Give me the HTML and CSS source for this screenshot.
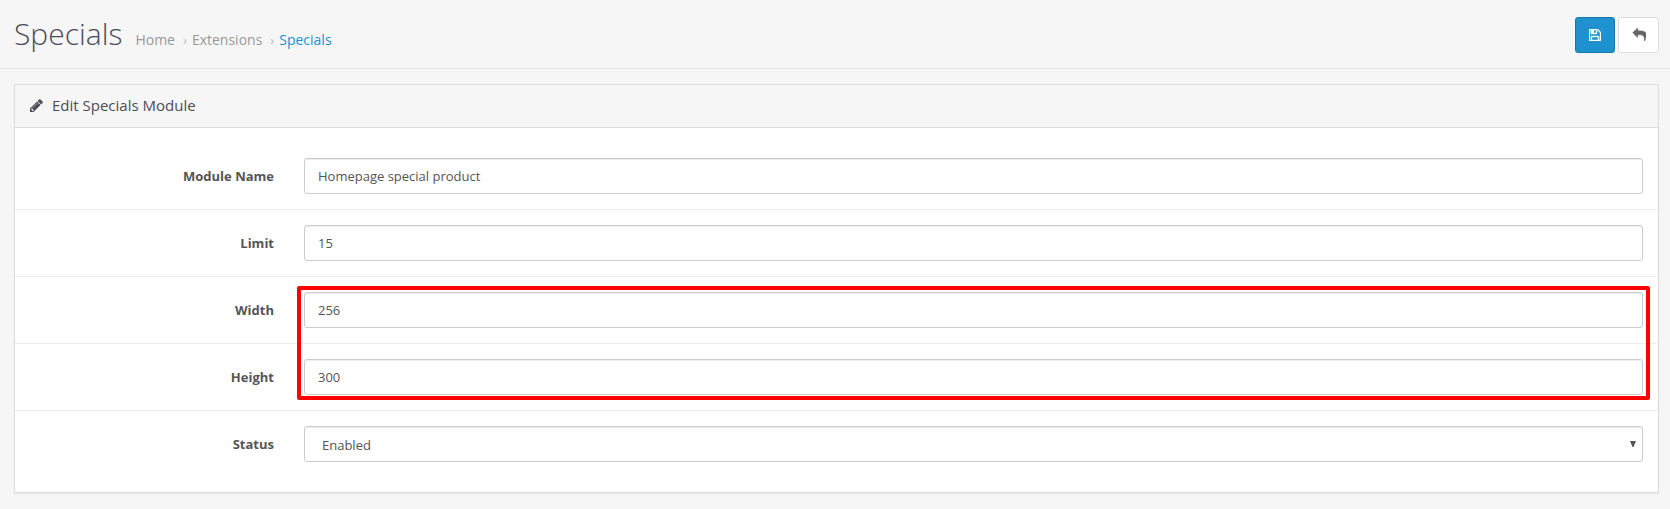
FILE: index.html
```html
<!DOCTYPE html>
<html lang="en">
<head>
<meta charset="utf-8">
<title>Specials</title>
<link rel="stylesheet" href="styles.css">
</head>
<body>
<header class="page-header">
  <h1>Specials</h1>
  <ul class="breadcrumb">
    <li><a>Home</a></li>
    <li><a>Extensions</a></li>
    <li><a class="current">Specials</a></li>
  </ul>
  <div class="actions">
    <button class="btn btn-primary" type="button" aria-label="Save"><svg class="icon-save" viewBox="0 128 1536 1536"><path d="M384 1536h768v-384h-768v384zm896 0h128v-896q0-14-10-38.500t-20-34.500l-281-281q-10-10-34-20t-39-10v416q0 40-28 68t-68 28h-576q-40 0-68-28t-28-68v-416h-128v1280h128v-416q0-40 28-68t68-28h832q40 0 68 28t28 68v416zm-384-928v-320q0-13-9.500-22.500t-22.500-9.500h-192q-13 0-22.500 9.500t-9.500 22.500v320q0 13 9.500 22.500t22.500 9.500h192q13 0 22.500-9.500t9.500-22.500zm640 32v928q0 40-28 68t-68 28h-1344q-40 0-68-28t-28-68v-1344q0-40 28-68t68-28h928q40 0 88 20t76 48l280 280q28 28 48 76t20 88z"/></svg></button>
    <button class="btn btn-default" type="button" aria-label="Back"><svg class="icon-reply" viewBox="0 0 1792 1792"><path d="M1792 1120q0 166-127 451-3 7-10.500 24t-13.500 30-13 22q-12 17-28 17-15 0-23.500-10t-8.500-25q0-9 2.500-26.500t2.500-23.500q5-68 5-123 0-112-19.500-200.500t-54.500-153.500-89.500-111-122.500-75-149.500-40.500-173.500-12.500h-224v256q0 26-19 45t-45 19-45-19l-512-512q-19-19-19-45t19-45l512-512q19-19 45-19t45 19 19 45v256h224q713 0 875 403 53 134 53 333z"/></svg></button>
  </div>
</header>
<main class="panel">
  <div class="panel-heading">
    <svg class="icon-pencil" viewBox="128 128 1536 1536"><path d="M491 1536l91-91-235-235-91 91v107h128v128h107zm523-928q0-22-22-22-10 0-17 7l-542 542q-7 7-7 17 0 22 22 22 10 0 17-7l542-542q7-7 7-17zm-54-192l416 416-832 832h-416v-416zm683 96q0 53-37 90l-166 166-416-416 166-165q36-38 90-38 53 0 91 38l235 234q37 39 37 91z"/></svg>
    <h2>Edit Specials Module</h2>
  </div>
  <form class="panel-body">
    <div class="form-group"><label for="name">Module Name</label><input class="control" id="name" value="Homepage special product"></div>
    <div class="form-group"><label for="limit">Limit</label><input class="control" id="limit" value="15"></div>
    <div class="highlighted">
      <div class="form-group"><label for="width">Width</label><input class="control" id="width" value="256"></div>
      <div class="form-group"><label for="height">Height</label><input class="control" id="height" value="300"></div>
      <div class="highlight"></div>
    </div>
    <div class="form-group"><label for="status">Status</label>
      <div class="control select"><span id="status">Enabled</span><svg class="caret" viewBox="0 0 6 6"><path d="M0 0h6L3.500 6h-1z"/></svg></div>
    </div>
  </form>
</main>
</body>
</html>
```
FILE: styles.css
```css
* { box-sizing: border-box; }
body {
  margin: 0;
  height: 509px;
  overflow: hidden;
  background: #f6f6f6;
  color: #555;
  font: 13px/20px "Open Sans", sans-serif;
}
svg { display: block; fill: currentColor; }
.page-header {
  display: flex;
  height: 69px;
  padding: 0 11px 0 14px;
  border-bottom: 1px solid #e7e7e7;
}
h1 {
  margin: 13px 0 0;
  color: #4c4d5a;
  font-size: 30px;
  font-weight: 300;
  line-height: 41px;
}
.breadcrumb {
  display: flex;
  margin: 30px 0 0 13px;
  padding: 0;
  list-style: none;
  color: #999;
  font-size: 14px;
}
.breadcrumb li + li::before {
  content: "›";
  padding: 0 5px 0 8px;
  color: #bbb;
  font-size: 13px;
}
.breadcrumb .current { color: #1e91cf; }
.actions {
  display: flex;
  gap: 3px;
  margin: 17px 0 0 auto;
}
.btn {
  display: flex;
  align-items: center;
  justify-content: center;
  height: 36px;
  padding: 0;
  border: 1px solid;
  border-radius: 3px;
}
.btn-primary {
  width: 40px;
  background: #1e91cf;
  border-color: #1978ab;
  color: #fff;
}
.btn-default {
  width: 41px;
  background: #fff;
  border-color: #ddd;
  color: #666;
}
.icon-save { width: 12px; height: 12px; stroke: #fff; stroke-width: 50; }
.icon-reply { width: 14px; height: 14px; stroke: #666; stroke-width: 60; }
.panel {
  height: 409px;
  margin: 15px 11px 0 14px;
  background: #fff;
  border: 1px solid #dcdcdc;
  box-shadow: 0 1px 1px rgba(0, 0, 0, .05);
}
.panel-heading {
  display: flex;
  align-items: center;
  height: 43px;
  padding: 0 0 1px 15px;
  background: #f6f6f6;
  border-bottom: 1px solid #dcdcdc;
  color: #4c4d5a;
}
h2 {
  margin: -1px 0 0 9px;
  font-size: 15px;
  font-weight: 400;
}
.icon-pencil { width: 13px; height: 13px; }
.panel-body { padding-top: 15px; }
.form-group {
  display: flex;
  align-items: center;
  height: 67px;
  padding-right: 15px;
  border-bottom: 1px solid #ededed;
}
.form-group:last-child { border-bottom-color: transparent; }
.highlighted { position: relative; }
.highlighted .form-group { border-bottom-color: #ededed; }
label {
  width: 259px;
  margin-right: 30px;
  text-align: right;
  font-weight: 700;
}
.control {
  flex: 1;
  height: 36px;
  padding: 8px 13px;
  background: #fff;
  border: 1px solid #ccc;
  border-radius: 3px;
  box-shadow: inset 0 1px 1px rgba(0, 0, 0, .075);
  color: #555;
  font: inherit;
}
.select {
  display: flex;
  align-items: center;
  justify-content: space-between;
  padding: 2px 6px 0 17px;
}
.caret { width: 6px; height: 6px; margin-top: -3px; }
/* Annotation frame laid over the two dimension fields */
.highlight {
  position: absolute;
  top: 9px;
  left: 282px;
  right: 8px;
  height: 114px;
  border: 4px solid #f00;
  border-radius: 2px;
}
```
